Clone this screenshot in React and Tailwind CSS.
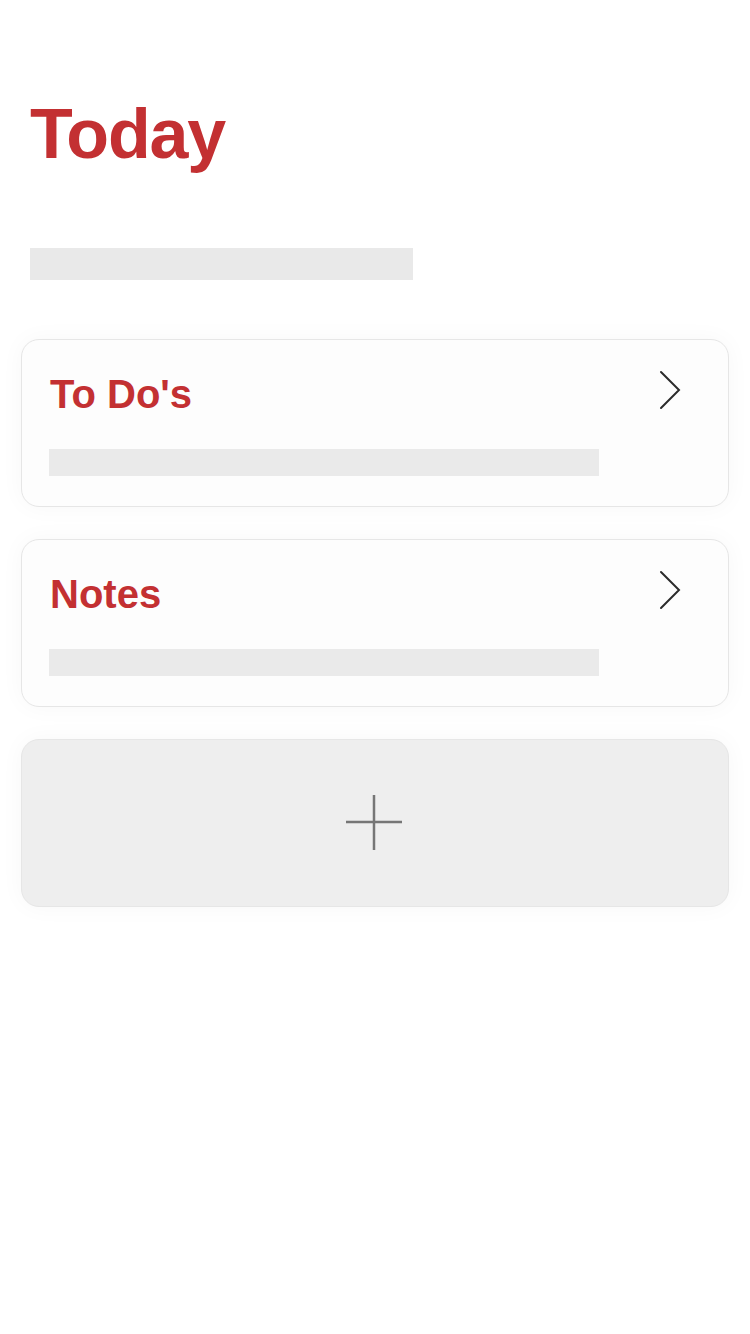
const Chevron = () => (
  <svg width="24" height="40" viewBox="0 0 24 40" className="-mt-2 mr-[46px]">
    <polyline
      points="3,2 21,20 3,38"
      fill="none"
      stroke="#2b2b2b"
      strokeWidth="2"
      strokeLinecap="round"
      strokeLinejoin="miter"
    />
  </svg>
);

const Card = ({ title }) => (
  <div className="h-[168px] rounded-[18px] border border-[#e6e6e6] bg-[#fdfdfd] pl-[27px] pt-[34px] shadow-[0_0_24px_rgba(0,0,0,0.035)]">
    <div className="flex items-center justify-between">
      <h2 className="pl-[1px] text-[40px] font-bold leading-none text-[#c33032]">{title}</h2>
      <Chevron />
    </div>
    <div className="mt-[35px] h-[27px] w-[550px] bg-[#eaeaea]" />
  </div>
);

const App = () => {
  return (
    <div
      className="min-h-[1334px] w-[750px] bg-white px-[21px] pt-[99px]"
      style={{ fontFamily: '"Liberation Sans", Arial, sans-serif' }}
    >
      <h1 className="pl-[9px] text-[70px] font-bold leading-none tracking-[-1.2px] text-[#c33032]">
        Today
      </h1>
      <div className="ml-[9px] mt-[79px] h-[32px] w-[383px] bg-[#e9e9e9]" />
      <div className="mt-[59px] flex flex-col gap-[32px]">
        <Card title="To Do's" />
        <Card title="Notes" />
        <div className="flex h-[168px] items-center justify-center rounded-[18px] border border-[#e6e6e6] bg-[#eeeeee] shadow-[0_0_24px_rgba(0,0,0,0.035)]">
          <svg width="58" height="58" viewBox="0 0 58 58" className="mr-[2px]">
            <line x1="29" y1="1" x2="29" y2="56" stroke="#767676" strokeWidth="2.5" />
            <line x1="1" y1="28" x2="57" y2="28" stroke="#767676" strokeWidth="2.5" />
          </svg>
        </div>
      </div>
    </div>
  );
};

export default App;
